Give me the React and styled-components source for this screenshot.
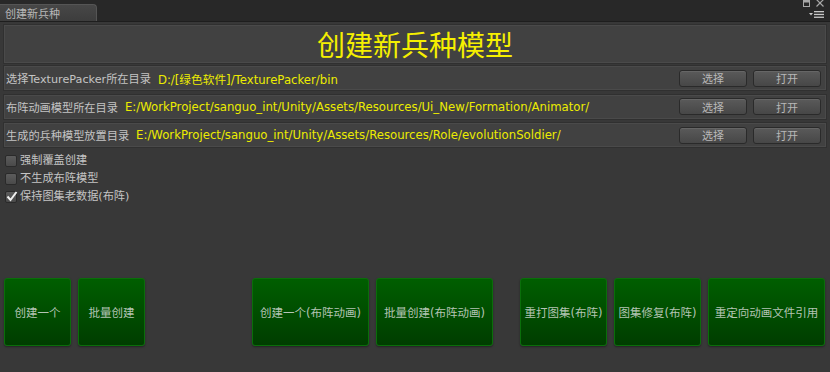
import React from "react";
import styled, { createGlobalStyle } from "styled-components";

const Global = createGlobalStyle`
  html, body { margin: 0; padding: 0; background: #383838; }
  #root { width: 830px; height: 372px; }
`;

const paths = [
  { label: "选择TexturePacker所在目录", value: "D:/[绿色软件]/TexturePacker/bin" },
  {
    label: "布阵动画模型所在目录",
    value: "E:/WorkProject/sanguo_int/Unity/Assets/Resources/Ui_New/Formation/Animator/",
  },
  {
    label: "生成的兵种模型放置目录",
    value: "E:/WorkProject/sanguo_int/Unity/Assets/Resources/Role/evolutionSoldier/",
  },
];

const options = [
  { label: "强制覆盖创建", checked: false },
  { label: "不生成布阵模型", checked: false },
  { label: "保持图集老数据(布阵)", checked: true },
];

const actions = [
  { label: "创建一个", width: 67, lead: 0 },
  { label: "批量创建", width: 67, lead: 0 },
  { label: "创建一个(布阵动画)", width: 117, lead: 100 },
  { label: "批量创建(布阵动画)", width: 117, lead: 0 },
  { label: "重打图集(布阵)", width: 87, lead: 20 },
  { label: "图集修复(布阵)", width: 87, lead: 0 },
  { label: "重定向动画文件引用", width: 117, lead: 0 },
];

const App = () => {
  return (
    <Window>
      <Global />
      <TopBar>
        <Tab>创建新兵种</Tab>
        <Controls>
          <WinButtons>
            <svg width="7" height="7" viewBox="0 0 7 7">
              <rect x="0.5" y="0.5" width="6" height="6" fill="none" stroke="#a8a8a8" />
              <rect x="0.5" y="0.5" width="6" height="2" fill="#a8a8a8" />
            </svg>
            <svg width="8" height="8" viewBox="0 0 8 8">
              <path d="M0.5 0.5 L7.5 7.5 M7.5 0.5 L0.5 7.5" stroke="#a8a8a8" strokeWidth="1.2" />
            </svg>
          </WinButtons>
          <svg width="16" height="7" viewBox="0 0 16 7">
            <path d="M0 2 L4 2 L2 4.5 Z" fill="#c8c8c8" />
            <rect x="5" y="0" width="10" height="1.3" fill="#c8c8c8" />
            <rect x="5" y="2.8" width="10" height="1.3" fill="#c8c8c8" />
            <rect x="5" y="5.6" width="10" height="1.3" fill="#c8c8c8" />
          </svg>
        </Controls>
      </TopBar>
      <Body>
        <TitleBox>创建新兵种模型</TitleBox>
        {paths.map((p) => (
          <PathRow key={p.label}>
            <Label>{p.label}</Label>
            <PathValue>{p.value}</PathValue>
            <SmallButton>选择</SmallButton>
            <SmallButton>打开</SmallButton>
          </PathRow>
        ))}
        <Options>
          {options.map((o) => (
            <Option key={o.label}>
              <Box>
                {o.checked && (
                  <svg width="12" height="11" viewBox="0 0 12 11">
                    <path
                      d="M1.5 5.5 L4.5 9 L10.5 1"
                      fill="none"
                      stroke="#f0f0f0"
                      strokeWidth="2"
                    />
                  </svg>
                )}
              </Box>
              {o.label}
            </Option>
          ))}
        </Options>
        <Actions>
          {actions.map((a) => (
            <BigButton key={a.label} $width={a.width} $lead={a.lead}>
              {a.label}
            </BigButton>
          ))}
        </Actions>
      </Body>
    </Window>
  );
};

const Window = styled.div`
  width: 830px;
  height: 372px;
  display: flex;
  flex-direction: column;
  background: #383838;
  font-family: "DejaVu Sans", "Noto Sans CJK SC", sans-serif;
  font-size: 11.7px;
  overflow: hidden;
`;

const TopBar = styled.div`
  height: 22px;
  background: #282828;
  border-bottom: 1px solid #1e1e1e;
  box-sizing: border-box;
  display: flex;
  align-items: flex-end;
  justify-content: space-between;
`;

const Tab = styled.div`
  width: 97px;
  height: 17px;
  box-sizing: border-box;
  background: linear-gradient(#474747, #3d3d3d);
  border: 1px solid #555;
  border-bottom: none;
  border-left: none;
  border-radius: 0 4px 0 0;
  color: #b8b8b8;
  font-family: "Noto Sans CJK SC", sans-serif;
  font-size: 11px;
  line-height: 16px;
  padding-left: 5px;
`;

const Controls = styled.div`
  display: flex;
  flex-direction: column;
  align-items: flex-end;
  gap: 4px;
  padding: 0 5px 3px 0;
`;

const WinButtons = styled.div`
  display: flex;
  align-items: center;
  gap: 6px;
  padding-right: 1px;
`;

const Body = styled.div`
  flex: 1;
  display: flex;
  flex-direction: column;
  padding: 3px 4px 26px 4px;
`;

const Panel = styled.div`
  box-sizing: border-box;
  background: #414141;
  border: 1px solid #4a4a4a;
  outline: 1px solid #303030;
`;

const TitleBox = styled(Panel)`
  height: 38px;
  flex-shrink: 0;
  display: flex;
  align-items: center;
  justify-content: center;
  color: #f5ef00;
  font-family: "Noto Sans CJK SC", sans-serif;
  font-size: 28px;
  font-weight: 400;
  margin-bottom: 3px;
`;

const PathRow = styled(Panel)`
  height: 24px;
  flex-shrink: 0;
  display: flex;
  align-items: center;
  padding: 0 4px 0 1px;
  margin-bottom: 4.5px;
`;

const Label = styled.span`
  color: #c4c4c4;
  font-size: 11.2px;
  margin-right: 7px;
`;

const PathValue = styled.span`
  flex: 1;
  color: #ecec00;
`;

const SmallButton = styled.div`
  width: 68px;
  height: 17px;
  box-sizing: border-box;
  margin-left: 6px;
  border-radius: 3px;
  border: 1px solid #2a2a2a;
  background: linear-gradient(#5a5a5a, #474747);
  box-shadow: inset 0 1px 0 #666;
  color: #b8b8b8;
  font-family: "Noto Sans CJK SC", sans-serif;
  font-size: 11px;
  display: flex;
  align-items: center;
  justify-content: center;
`;

const Options = styled.div`
  display: flex;
  flex-direction: column;
  gap: 6px;
  padding: 3px 0 0 1px;
`;

const Option = styled.div`
  display: flex;
  align-items: center;
  gap: 3px;
  color: #c4c4c4;
  font-size: 11.2px;
  height: 12px;
  line-height: 12px;
`;

const Box = styled.div`
  width: 12px;
  height: 12px;
  box-sizing: border-box;
  border-radius: 2px;
  border: 1px solid #2a2a2a;
  background: linear-gradient(#5c5c5c, #4a4a4a);
  position: relative;
  svg {
    position: absolute;
    left: 0;
    top: -1px;
  }
`;

const Actions = styled.div`
  margin-top: auto;
  display: flex;
  gap: 7px;
`;

const BigButton = styled.div`
  width: ${(p) => p.$width}px;
  height: 68px;
  margin-left: ${(p) => p.$lead}px;
  box-sizing: border-box;
  border-radius: 3px;
  border: 1px solid #0a6e0a;
  background: linear-gradient(#005e00, #003d00);
  box-shadow: 0 1px 2px rgba(0, 0, 0, 0.4);
  color: #b4c4b4;
  font-size: 11.5px;
  display: flex;
  align-items: center;
  justify-content: center;
  white-space: nowrap;
`;

export default App;
